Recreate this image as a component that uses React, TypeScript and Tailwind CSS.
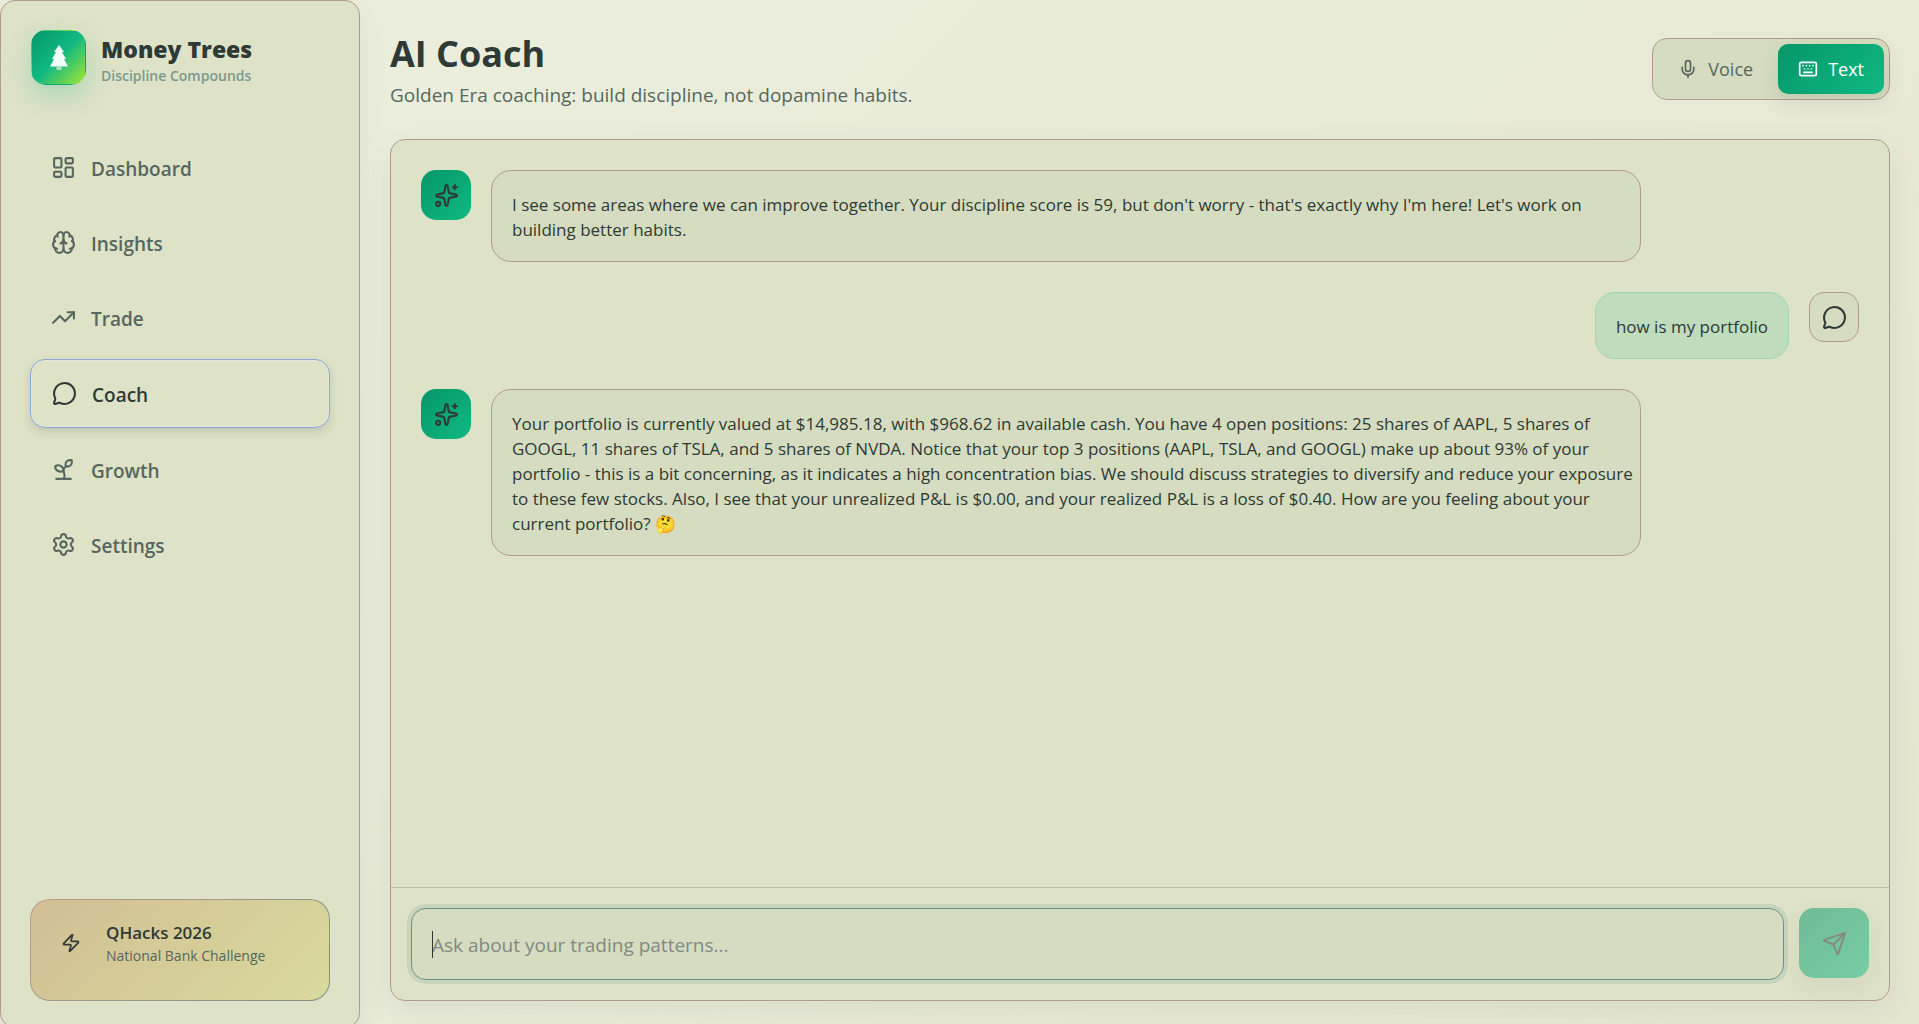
import React from "react";
import {
  Brain,
  Keyboard,
  LayoutDashboard,
  MessageCircle,
  Mic,
  Send,
  Settings,
  Sparkles,
  Sprout,
  TrendingUp,
  Zap,
  type LucideIcon,
} from "lucide-react";

const navItems: { label: string; icon: LucideIcon; active?: boolean }[] = [
  { label: "Dashboard", icon: LayoutDashboard },
  { label: "Insights", icon: Brain },
  { label: "Trade", icon: TrendingUp },
  { label: "Coach", icon: MessageCircle, active: true },
  { label: "Growth", icon: Sprout },
  { label: "Settings", icon: Settings },
];

const messages: { from: "coach" | "user"; text: string }[] = [
  {
    from: "coach",
    text: "I see some areas where we can improve together. Your discipline score is 59, but don't worry - that's exactly why I'm here! Let's work on building better habits.",
  },
  { from: "user", text: "how is my portfolio" },
  {
    from: "coach",
    text: "Your portfolio is currently valued at $14,985.18, with $968.62 in available cash. You have 4 open positions: 25 shares of AAPL, 5 shares of GOOGL, 11 shares of TSLA, and 5 shares of NVDA. Notice that your top 3 positions (AAPL, TSLA, and GOOGL) make up about 93% of your portfolio - this is a bit concerning, as it indicates a high concentration bias. We should discuss strategies to diversify and reduce your exposure to these few stocks. Also, I see that your unrealized P&L is $0.00, and your realized P&L is a loss of $0.40. How are you feeling about your current portfolio? 🤔",
  },
];

function TreeLogo() {
  return (
    <div className="flex size-[55px] shrink-0 items-center justify-center rounded-[15px] border border-transparent bg-[linear-gradient(135deg,#059669_0%,#10b981_50%,#a3e635_100%)] shadow-[0_10px_25px_rgba(16,185,129,0.25)]">
      <svg width="18" height="25" viewBox="0 0 18 25" aria-hidden="true">
        <path d="M9 0 14 7h-2l4 7h-2l4 7.5H0L4 14H2l4-7H4Z" fill="#f3fdf8" />
        <path d="M6.500 21.500h5V25h-5Z" fill="#a9e4cb" />
      </svg>
    </div>
  );
}

function Sidebar() {
  return (
    <aside className="-mb-1 flex w-[360px] shrink-0 flex-col rounded-[15px] border border-[#b49a8c] bg-[#dee2c7] px-[29px] pt-[29px] pb-[26px] shadow-[0_8px_30px_rgba(47,62,58,0.08)]">
      <div className="flex gap-[15px] px-px">
        <TreeLogo />
        <div className="pt-1">
          <p className="text-[23px] leading-[31px] font-extrabold text-[#2d3a36]">Money Trees</p>
          <p className="text-[14px] leading-[22px] font-semibold text-[#7a998d]">Discipline Compounds</p>
        </div>
      </div>

      <nav className="mt-[47px] flex flex-col gap-2">
        {navItems.map(({ label, icon: Icon, active }) => (
          <a
            key={label}
            href="#"
            aria-current={active ? "page" : undefined}
            className={
              active
                ? "flex h-[69px] items-center gap-[15px] rounded-[15px] border border-[#88a8dc] px-[21px] text-[19px] font-semibold text-[#2d3a36] shadow-[inset_0_0_0_1px_#e3e6e0,0_4px_8px_rgba(47,62,58,0.16)]"
                : "flex h-[67px] items-center gap-[15px] rounded-[15px] px-[21px] text-[19px] font-semibold text-[#56675f]"
            }
          >
            <Icon size={25} />
            <span className="pt-1">{label}</span>
          </a>
        ))}
      </nav>

      <div className="mt-auto flex min-h-[102px] items-start gap-[15px] rounded-[20px] border border-transparent p-5 [background:linear-gradient(135deg,#d2be95,#d5cc98_50%,#d8da9c)_padding-box,linear-gradient(135deg,#b99f90,#828f84)_border-box]">
        <div className="flex h-[45px] w-10 items-center justify-center">
          <Zap size={20} className="text-[#2d3a36]" />
        </div>
        <div>
          <p className="text-[17px] leading-[26px] font-semibold text-[#2d3a36]">QHacks 2026</p>
          <p className="text-[14px] leading-5 text-[#56675f]">National Bank Challenge</p>
        </div>
      </div>
    </aside>
  );
}

function ModeToggle() {
  return (
    <div className="mt-2 flex gap-[5px] rounded-[15px] border border-[#b49a8c] bg-[#d6dcbf] p-[5px] text-[18px]">
      <button type="button" className="flex h-[50px] items-center gap-[10px] rounded-[10px] px-5 text-[#56675f]">
        <Mic size={20} />
        Voice
      </button>
      <button
        type="button"
        aria-pressed="true"
        className="flex h-[50px] items-center gap-[10px] rounded-[10px] bg-[linear-gradient(135deg,#059669,#10b981)] px-5 text-white shadow-[0_8px_20px_rgba(47,62,58,0.12)]"
      >
        <Keyboard size={20} />
        Text
      </button>
    </div>
  );
}

function Message({ from, text }: { from: "coach" | "user"; text: string }) {
  if (from === "user") {
    return (
      <div className="flex items-start justify-end gap-5">
        <p className="max-w-4/5 rounded-[20px] border border-[#9dd7b3] bg-[#bfdcbd] px-5 pt-[21px] pb-[19px] text-[17px] leading-[25px] text-[#2d3a36]">
          {text}
        </p>
        <div className="flex size-[50px] shrink-0 items-center justify-center rounded-[15px] border border-[#b49a8c] bg-[#d6dcbf]">
          <MessageCircle size={25} className="text-[#2d3a36]" />
        </div>
      </div>
    );
  }
  return (
    <div className="flex items-start gap-5">
      <div className="flex size-[50px] shrink-0 items-center justify-center rounded-[15px] bg-[linear-gradient(135deg,#059669,#10b981)]">
        <Sparkles size={25} className="text-[#2d3a36]" />
      </div>
      <p className="max-w-4/5 rounded-[20px] border border-[#b49a8c] bg-[#d6dcbf] pt-[21px] pr-1 pb-[19px] pl-5 text-[17px] leading-[25px] text-[#2d3a36]">
        {text}
      </p>
    </div>
  );
}

function Composer() {
  return (
    <form className="flex gap-[15px] border-t border-[#c1bda5] p-5" onSubmit={(e) => e.preventDefault()}>
      <div className="relative flex-1">
        <input
          type="text"
          aria-label="Message"
          placeholder="Ask about your trading patterns..."
          className="h-[72px] w-full rounded-[15px] border border-[#6f9288] bg-[#d6dcbf] px-5 pt-[2px] text-[19px] text-[#2d3a36] ring-4 ring-[#c9d4bc] outline-none placeholder:text-[#7f8a83]"
        />
        <span className="absolute top-[23px] left-[21px] h-[27px] w-px bg-[#2d3a36]" />
      </div>
      <button
        type="submit"
        disabled
        aria-label="Send"
        className="flex size-[70px] items-center justify-center rounded-[15px] bg-[linear-gradient(135deg,#059669,#10b981)] text-[#2d3a36] opacity-50 shadow-[0_8px_20px_rgba(47,62,58,0.12)]"
      >
        <Send size={25} />
      </button>
    </form>
  );
}

export default function App() {
  return (
    <div className="flex min-h-screen overflow-clip bg-[linear-gradient(135deg,#ecefdd,#e9ebd9_50%,#e4e6cf)] font-['Open_Sans','Noto_Sans',sans-serif]">
      <Sidebar />
      <main className="flex min-w-0 flex-1 flex-col pt-[30px] pr-[29px] pb-[23px] pl-[30px]">
        <header className="flex items-start justify-between">
          <div>
            <h1 className="text-[36px] leading-[47px] font-bold text-[#2d3a36]">AI Coach</h1>
            <p className="mt-[3px] text-[19px] leading-[30px] text-[#56675f]">
              Golden Era coaching: build discipline, not dopamine habits.
            </p>
          </div>
          <ModeToggle />
        </header>

        <section className="mt-[29px] flex flex-1 flex-col rounded-[15px] border border-[#b49a8c] bg-[#dee2c7] shadow-[0_8px_30px_rgba(47,62,58,0.08)]">
          <div className="flex flex-1 flex-col gap-[30px] p-[30px]">
            {messages.map((m) => (
              <Message key={m.text} from={m.from} text={m.text} />
            ))}
          </div>
          <Composer />
        </section>
      </main>
    </div>
  );
}
